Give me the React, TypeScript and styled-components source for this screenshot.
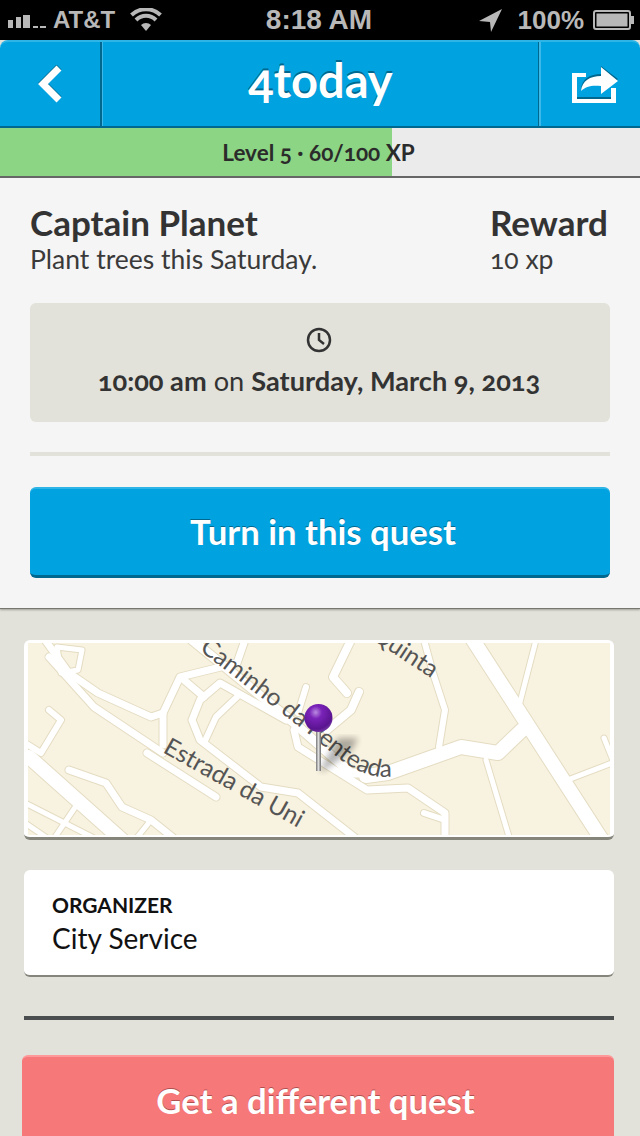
import React from 'react';
import styled, { createGlobalStyle } from 'styled-components';

const GlobalStyle = createGlobalStyle`
  html, body {
    margin: 0;
    padding: 0;
    background: #e2e2da;
  }
  * {
    box-sizing: border-box;
  }
`;

const Page = styled.div`
  width: 640px;
  height: 1136px;
  overflow: hidden;
  background: #e2e2da;
  font-family: Lato, "Open Sans", sans-serif;
  font-feature-settings: "onum" 1;
  color: #333;
`;

const StatusBar = styled.div`
  height: 40px;
  background: #000;
  color: #b8b8b8;
  font-family: "Liberation Sans", sans-serif;
  font-weight: 700;
  font-size: 26px;
  display: grid;
  grid-template-columns: 1fr auto 1fr;
  align-items: center;
  padding: 0 6px 0 8px;
`;

const StatusGroup = styled.div<{ $end?: boolean }>`
  display: flex;
  align-items: center;
  justify-content: ${p => (p.$end ? 'flex-end' : 'flex-start')};
`;

const Carrier = styled.span`
  font-size: 24px;
  margin: 0 15px 0 7px;
`;

const Battery = styled.span`
  margin: 0 9px 0 15px;
`;

const Clock = styled.div`
  font-size: 28px;
  margin-left: -4px;
`;

const Header = styled.header`
  height: 88px;
  display: flex;
  background: #00a3e0;
  border-radius: 8px 8px 0 0;
  border-top: 2px solid #2fb4e6;
  border-bottom: 2px solid #00688f;
`;

const HeaderButton = styled.div<{ $side: 'left' | 'right' }>`
  width: ${p => (p.$side === 'left' ? '100px' : '99px')};
  flex: none;
  display: flex;
  align-items: center;
  justify-content: center;
  padding-left: ${p => (p.$side === 'left' ? '0' : '9px')};
`;

const HeaderDivider = styled.div`
  width: 3px;
  flex: none;
  background: linear-gradient(to right, #00688f 0 1.5px, #3cb9e8 1.5px 3px);
`;

const Title = styled.h1`
  flex: 1;
  margin: 0;
  text-align: center;
  color: #fff;
  font-size: 47px;
  font-weight: 700;
  line-height: 77px;
  text-shadow: 0 -2px 0 #00688f;
`;

const Progress = styled.div`
  position: relative;
  height: 50px;
  background: #ebebeb;
  border-bottom: 2px solid #666;
  display: flex;
  align-items: center;
  justify-content: center;
`;

const ProgressFill = styled.div`
  position: absolute;
  left: 0;
  top: 0;
  bottom: 0;
  background: #8bd584;
`;

const ProgressLabel = styled.div`
  position: relative;
  font-size: 22.5px;
  font-weight: 700;
  color: #2b2b2b;
  margin-left: -3px;
`;

const Panel = styled.section`
  background: #f5f5f5;
  padding: 24px 30px 30px;
  border-bottom: 1px solid #77776f;
  box-shadow: 0 1px 2px rgba(0, 0, 0, 0.3);
`;

const QuestHead = styled.div`
  display: flex;
  justify-content: space-between;
`;

const QuestTitle = styled.div`
  font-size: 35px;
  font-weight: 700;
  line-height: 40px;
  color: #333;
  white-space: nowrap;
`;

const QuestText = styled.div`
  margin-top: 2px;
  font-size: 26.5px;
  line-height: 31px;
  color: #3a3a3a;
`;

const RewardColumn = styled.div`
  width: 120px;
`;

const WhenBox = styled.div`
  margin-top: 28px;
  height: 119px;
  border-radius: 6px;
  background: #e2e2da;
  display: flex;
  flex-direction: column;
  align-items: center;
  padding: 24px 2px 0 0;
  font-size: 27.2px;
  color: #333;
`;

const WhenText = styled.div`
  margin-top: 12px;
  font-weight: 400;
  line-height: 32px;

  b {
    font-weight: 700;
  }
`;

const Rule = styled.div<{ $dark?: boolean }>`
  height: 4px;
  background: ${p => (p.$dark ? '#4a4e4e' : '#e2e2da')};
`;

const PanelRule = styled(Rule)`
  margin: 30px 0 31px;
`;

const ActionButton = styled.div<{ $color: string; $shade: string; $top?: string }>`
  height: 91px;
  border-radius: 6px;
  background: ${p => p.$color};
  border-bottom: 3px solid ${p => p.$shade};
  border-top: 2px solid ${p => p.$top || p.$color};
  color: #fff;
  font-size: 34.7px;
  font-weight: 700;
  display: flex;
  align-items: center;
  justify-content: center;
  padding: 0 0 2px 6px;
  text-shadow: 0 -1px 0 ${p => p.$shade};
`;

const Content = styled.div`
  padding: 31px 26px 0 24px;
`;

const MapCard = styled.div`
  height: 200px;
  background: #fff;
  border-radius: 6px;
  padding: 3px 4px 2px;
  border-bottom: 3px solid #85857c;
  overflow: hidden;

  svg {
    display: block;
    width: 100%;
    height: 100%;
  }
`;

const InfoCard = styled.div`
  margin-top: 30px;
  height: 107px;
  background: #fff;
  border-radius: 6px;
  border-bottom: 2px solid #85857c;
  padding: 22px 28px;
  color: #111;
`;

const InfoLabel = styled.div`
  font-size: 21px;
  font-weight: 700;
  line-height: 26px;
`;

const InfoValue = styled.div`
  font-size: 28px;
  line-height: 40px;
`;

const ContentRule = styled(Rule)`
  margin-top: 39px;
`;

const BottomButton = styled(ActionButton)`
  margin: 35px 0 0 -2px;
  height: 90px;
  padding: 0 5px 2px 0;
  border-radius: 6px 6px 0 0;
  border-bottom: none;
`;

const SignalIcon = () => (
  <svg width="38" height="16" viewBox="0 0 38 16">
    <g fill="#b8b8b8">
      <rect x="0" y="8" width="5" height="8" />
      <rect x="8" y="5" width="5" height="11" />
      <rect x="15" y="3" width="7" height="13" />
      <rect x="25" y="14" width="5" height="2" />
      <rect x="32" y="14" width="6" height="2" />
    </g>
  </svg>
);

const WifiIcon = () => (
  <svg width="32" height="24" viewBox="0 0 32 24">
    <path d="M16 23l-5-6a7 7 0 0 1 10 0z" fill="#b8b8b8" />
    <path d="M6 12a14 14 0 0 1 20 0M1.500 7a21 21 0 0 1 29 0" fill="none" stroke="#b8b8b8" strokeWidth="4" />
  </svg>
);

const LocationIcon = () => (
  <svg width="24" height="23" viewBox="0 0 24 23">
    <path d="M23 0L0 12l11 1 1 10z" fill="#b8b8b8" />
  </svg>
);

const BatteryIcon = () => (
  <svg width="41" height="20" viewBox="0 0 41 20">
    <rect x="1" y="1" width="36" height="18" rx="2" fill="none" stroke="#b8b8b8" strokeWidth="2" />
    <rect x="3.500" y="3.500" width="31" height="13" fill="#b8b8b8" />
    <rect x="38" y="6" width="3" height="8" fill="#b8b8b8" />
  </svg>
);

const BackIcon = () => (
  <svg width="26" height="38" viewBox="0 0 26 38">
    <path d="M22 3L6 19l16 16" fill="none" stroke="#00688f" strokeWidth="7" transform="translate(0 -1)" />
    <path d="M22 3L6 19l16 16" fill="none" stroke="#fff" strokeWidth="7" />
  </svg>
);

const ShareIcon = () => (
  <svg width="48" height="40" viewBox="0 0 48 40">
    <path d="M1 9h14v4H6v22h34V24h5v15H1z" fill="#fff" />
    <path d="M6 33h34v2H6z" fill="#00688f" />
    <path d="M10 27c1-10 9-15 20-15V4l17 13-17 13v-8c-9-1-15 0-20 5z" fill="#00688f" transform="translate(0 -2)" />
    <path d="M10 27c1-10 9-15 20-15V3l17 14-17 13v-8c-9-1-15 0-20 5z" fill="#fff" />
  </svg>
);

const ClockIcon = () => (
  <svg width="26" height="26" viewBox="0 0 26 26">
    <circle cx="13" cy="13" r="11" fill="none" stroke="#333" strokeWidth="2.500" />
    <path d="M13 6v7l5 4" fill="none" stroke="#333" strokeWidth="2.500" />
  </svg>
);

// page coordinates: [path, width]
const ROADS: [string, number][] = [
  ['M473 640L602 840', 14],
  ['M536 640L518 710', 5],
  ['M486 760L510 840', 5],
  ['M565 781L612 763', 5],
  ['M604 738L612 758', 5],
  ['M424 640L433 673L445 710L439 747', 6],
  ['M351 640L333 677L347 693', 8],
  ['M359 692L351 710L327 730', 8],
  ['M306 687L298 713', 6],
  ['M245 640L237 663L180 677L163 713L163 745', 7],
  ['M45 640L69 673L98 693L151 717L163 713', 7],
  ['M57 647L82 650L78 670L61 673L57 647', 5],
  ['M184 680L204 697', 7],
  ['M286 720L220 683L200 700L192 720L200 740L261 787L298 793L358 840', 7],
  ['M237 697L216 717L204 743', 6],
  ['M294 730L298 747L351 780L367 790L408 788L445 813L445 840', 7],
  ['M424 813L445 820', 6],
  ['M49 657L94 707L163 753', 7],
  ['M147 753L216 797', 7],
  ['M29 757L122 840', 14],
  ['M69 770L106 783L122 807L151 820L176 840', 7],
  ['M25 743L41 753L61 720L49 710', 6],
  ['M25 803L98 840', 5],
  ['M25 823L50 840', 5],
  ['M78 803L53 840', 5],
  ['M151 820L135 840', 5],
  ['M192 640L294 723L351 773L388 773L461 747L498 753L522 730', 9],
];

const THICK_ROAD = 'M366 776L388 773L461 747L498 753L522 730';

const MapDrawing = () => (
  <svg viewBox="28 643 582 192" preserveAspectRatio="none">
    <defs>
      <radialGradient id="pinHead" cx="0.4" cy="0.3" r="0.75">
        <stop offset="0" stopColor="#b98ae0" />
        <stop offset="0.3" stopColor="#7a22b8" />
        <stop offset="0.8" stopColor="#5a1490" />
        <stop offset="1" stopColor="#7a40a8" />
      </radialGradient>
      <linearGradient id="pinRod" x1="0" x2="1" y1="0" y2="0">
        <stop offset="0" stopColor="#777" />
        <stop offset="0.5" stopColor="#ddd" />
        <stop offset="1" stopColor="#666" />
      </linearGradient>
      <filter id="blur">
        <feGaussianBlur stdDeviation="3" />
      </filter>
      <path id="labelOne" d="M199 650L310 735C345 762 370 795 425 765" />
      <path id="labelTwo" d="M162 752L320 840" />
      <path id="labelThree" d="M370 638L440 684" />
    </defs>
    <rect x="0" y="600" width="700" height="300" fill="#f8f2e0" />
    <g fill="none" stroke="#e4dcc2" strokeLinejoin="round" strokeLinecap="round">
      {ROADS.map(([d, w]) => (
        <path key={d} d={d} strokeWidth={w + 2} />
      ))}
      <path d={THICK_ROAD} strokeWidth={16} />
    </g>
    <g fill="none" stroke="#fff" strokeLinejoin="round" strokeLinecap="round">
      {ROADS.map(([d, w]) => (
        <path key={d} d={d} strokeWidth={w} />
      ))}
      <path d={THICK_ROAD} strokeWidth={14} />
    </g>
    <g fontFamily="Lato, sans-serif" fontSize="24.5" fill="#555">
      <text><textPath href="#labelOne">Caminho da Penteada</textPath></text>
      <text><textPath href="#labelTwo">Estrada da Uni</textPath></text>
      <text><textPath href="#labelThree">Quinta</textPath></text>
    </g>
    <path d="M320 770L338 738L358 738L352 750L322 772z" fill="#000" opacity="0.3" filter="url(#blur)" />
    <rect x="316" y="730" width="5" height="41" fill="url(#pinRod)" />
    <ellipse cx="318.500" cy="718" rx="14" ry="14" fill="url(#pinHead)" />
  </svg>
);

const App: React.FC = () => {
  const fill = 61.25;
  return (
    <Page>
      <GlobalStyle />
      <StatusBar>
        <StatusGroup>
          <SignalIcon />
          <Carrier>AT&amp;T</Carrier>
          <WifiIcon />
        </StatusGroup>
        <Clock>8:18 AM</Clock>
        <StatusGroup $end>
          <LocationIcon />
          <Battery>100%</Battery>
          <BatteryIcon />
        </StatusGroup>
      </StatusBar>
      <Header>
        <HeaderButton $side="left"><BackIcon /></HeaderButton>
        <HeaderDivider />
        <Title>4today</Title>
        <HeaderDivider />
        <HeaderButton $side="right"><ShareIcon /></HeaderButton>
      </Header>
      <Progress>
        <ProgressFill style={{ width: `${fill}%` }} />
        <ProgressLabel>Level 5 · 60/100 XP</ProgressLabel>
      </Progress>
      <Panel>
        <QuestHead>
          <div>
            <QuestTitle>Captain Planet</QuestTitle>
            <QuestText>Plant trees this Saturday.</QuestText>
          </div>
          <RewardColumn>
            <QuestTitle>Reward</QuestTitle>
            <QuestText>10 xp</QuestText>
          </RewardColumn>
        </QuestHead>
        <WhenBox>
          <ClockIcon />
          <WhenText><b>10:00 am</b> on <b>Saturday, March 9, 2013</b></WhenText>
        </WhenBox>
        <PanelRule />
        <ActionButton $color="#00a3e0" $shade="#00688f" $top="#2fb4e6">Turn in this quest</ActionButton>
      </Panel>
      <Content>
        <MapCard><MapDrawing /></MapCard>
        <InfoCard>
          <InfoLabel>ORGANIZER</InfoLabel>
          <InfoValue>City Service</InfoValue>
        </InfoCard>
        <ContentRule $dark />
        <BottomButton $color="#f67878" $shade="#b05050" $top="#f99">Get a different quest</BottomButton>
      </Content>
    </Page>
  );
};

export default App;
